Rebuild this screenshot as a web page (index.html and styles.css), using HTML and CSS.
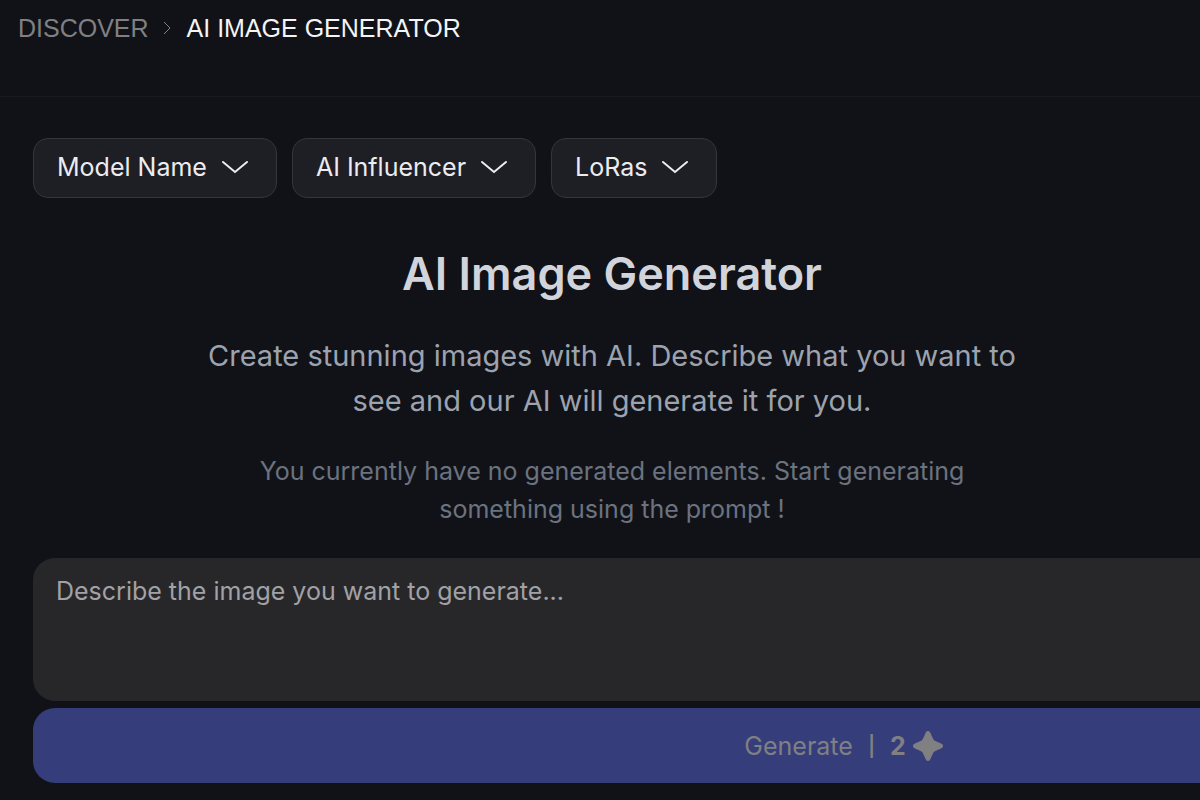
FILE: index.html
```html
<!DOCTYPE html>
<html lang="en">
<head>
  <meta charset="utf-8">
  <meta name="viewport" content="width=device-width, initial-scale=1">
  <title>AI Image Generator</title>
  <link rel="stylesheet" href="styles.css">
</head>
<body>
  <header class="topbar">
    <nav class="breadcrumb" aria-label="Breadcrumb">
      <a href="#">DISCOVER</a>
      <svg class="separator" viewBox="0 0 10 14" aria-hidden="true"><path d="M1 1l6 6-6 6"/></svg>
      <a href="#" class="current" aria-current="page">AI IMAGE GENERATOR</a>
    </nav>
  </header>

  <main class="content">
    <div class="filters">
      <button type="button" class="filter">Model Name
        <svg class="chevron" viewBox="0 0 26 14" aria-hidden="true"><path d="M2 2l12 10L26 2"/></svg>
      </button>
      <button type="button" class="filter">AI Influencer
        <svg class="chevron" viewBox="0 0 26 14" aria-hidden="true"><path d="M2 2l12 10L26 2"/></svg>
      </button>
      <button type="button" class="filter">LoRas
        <svg class="chevron" viewBox="0 0 26 14" aria-hidden="true"><path d="M2 2l12 10L26 2"/></svg>
      </button>
    </div>

    <section class="intro">
      <h1>AI Image Generator</h1>
      <p class="lead">Create stunning images with AI. Describe what you want to<br>see and our AI will generate it for you.</p>
      <p class="hint">You currently have no generated elements. Start generating<br>something using the prompt !</p>
    </section>

    <form class="prompt">
      <textarea aria-label="Prompt" placeholder="Describe the image you want to generate..."></textarea>
      <button type="submit" class="generate" disabled>
        <span>Generate</span>
        <span class="divider">|</span>
        <span class="cost">2
          <svg class="star" viewBox="0 0 30 30" aria-hidden="true"><path d="M15 0c1.300 0 1.900.8 2.400 2l2.900 6.200c.4.700.8 1.100 1.500 1.500L28 12.600c1.200.5 2 1.100 2 2.400s-.8 1.900-2 2.400l-6.200 2.900c-.7.4-1.100.8-1.500 1.500L17.400 28c-.5 1.200-1.100 2-2.400 2s-1.900-.8-2.400-2l-2.900-6.200c-.4-.7-.8-1.100-1.500-1.500L2 17.400c-1.200-.5-2-1.100-2-2.400s.8-1.900 2-2.400l6.200-2.900c.7-.4 1.100-.8 1.500-1.500L12.600 2c.5-1.200 1.100-2 2.400-2z"/></svg>
        </span>
      </button>
    </form>
  </main>
</body>
</html>
```
FILE: styles.css
```css
* {
  box-sizing: border-box;
}

body {
  margin: 0;
  background: #111217;
  color: #ececf0;
  font-family: Inter, "Liberation Sans", sans-serif;
  overflow-x: hidden;
}

button,
textarea {
  font-family: inherit;
  font-size: 25px;
}

.topbar {
  height: 97px;
  padding: 8px 18px;
  border-bottom: 1px solid #191a1f;
}

.breadcrumb {
  display: flex;
  align-items: center;
  gap: 14px;
  font-family: "Liberation Sans", sans-serif;
  font-size: 25px;
  line-height: 40px;
}

.breadcrumb a {
  color: #808083;
  text-decoration: none;
}

.breadcrumb .current {
  color: #f4f4f5;
}

.separator {
  width: 10px;
  height: 14px;
  fill: none;
  stroke: #808083;
  stroke-width: 1;
}

.content {
  padding: 41px 9px 17px 33px;
  overflow-x: clip;
}

.filters {
  display: flex;
  gap: 15px;
}

.filter {
  display: flex;
  align-items: center;
  gap: 14px;
  height: 60px;
  padding: 0 29px 2px 23px;
  border: 1px solid #35363b;
  border-radius: 15px;
  background: #1e1f24;
  color: #ececf0;
}

.chevron {
  width: 26px;
  height: 14px;
  overflow: visible;
  fill: none;
  stroke: #ececf0;
  stroke-width: 2;
  stroke-linecap: round;
}

.intro {
  margin-bottom: 30px;
  text-align: center;
}

.intro h1 {
  margin: 46px 0 29px;
  color: #d1d5db;
  font-size: 45px;
  font-weight: 600;
  line-height: 60px;
}

.intro p {
  margin: 0;
}

.intro .lead {
  margin-bottom: 29px;
  color: #9ca3af;
  font-size: 29px;
  line-height: 45px;
}

.hint {
  color: #6b7280;
  font-size: 25px;
  line-height: 38px;
}

/* the prompt runs wider than the column above it */
.prompt {
  display: flex;
  flex-direction: column;
  gap: 7px;
  width: 140%;
}

.prompt textarea {
  height: 143px;
  padding: 14px 23px;
  border: 0;
  border-radius: 22px;
  background: #272729;
  color: #ececf0;
  line-height: 38px;
  resize: none;
}

.prompt textarea::placeholder {
  color: #a1a1a6;
}

.generate {
  display: flex;
  align-items: center;
  justify-content: center;
  gap: 15px;
  height: 75px;
  border: 0;
  border-radius: 22px;
  background: #363d7b;
  color: #808083;
}

.divider {
  font-size: 20px;
  font-weight: 600;
}

.cost {
  display: flex;
  align-items: center;
  gap: 7px;
  font-weight: 700;
}

.star {
  width: 30px;
  height: 30px;
  fill: #808083;
}
```
